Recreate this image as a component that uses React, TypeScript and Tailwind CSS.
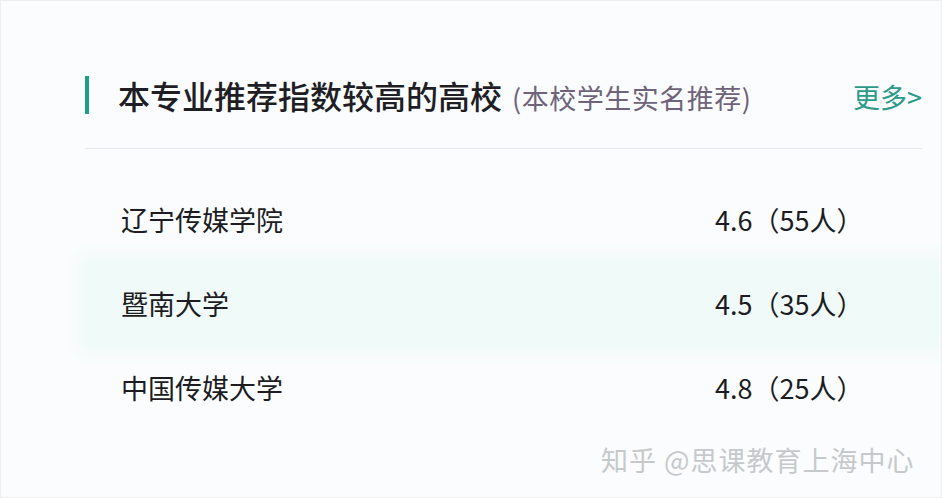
const schools = [
  { name: '辽宁传媒学院', score: '4.6', count: 55 },
  { name: '暨南大学', score: '4.5', count: 35, active: true },
  { name: '中国传媒大学', score: '4.8', count: 25 },
];

export default function App() {
  return (
    <div
      className="relative h-[498px] w-[942px] overflow-hidden border border-[#eceef0] bg-[#fafcfd]"
      style={{ fontFamily: '"Noto Sans CJK SC", "Noto Sans", sans-serif' }}
    >
      <div className="pl-[84px] pr-[19px] pt-[75px]">
        {/* header */}
        <div className="flex h-[38px] items-center">
          <div className="h-[38px] w-[4px] bg-[#1d9f87]" />
          <h2 className="ml-[29px] text-[32px] leading-none font-medium text-[#1e1e24]">本专业推荐指数较高的高校</h2>
          <span className="ml-[10px] mt-[4px] text-[27px] tracking-[0.5px] leading-none text-[#6e6379]">(本校学生实名推荐)</span>
          <a className="ml-auto mt-[2px] text-[27px] leading-none text-[#2b9a88]">更多&gt;</a>
        </div>
        <div className="mt-[34px] h-px bg-[#e5e8ea]" />
      </div>

      {/* list */}
      <div className="ml-[84px] mr-[4px] mt-[29px] flex flex-col">
        {schools.map((s) => (
          <div
            key={s.name}
            className={
              s.active
                ? 'flex h-[84px] items-center bg-[#f0faf8] shadow-[0_0_16px_6px_#f0faf8]'
                : 'flex h-[84px] items-center'
            }
          >
            <span className="w-[630px] pl-[36px] text-[27px] text-[#1c1c22]">{s.name}</span>
            <span className="text-[27px] text-[#1c1c22]">
              {s.score}（{s.count}人）
            </span>
          </div>
        ))}
      </div>

      {/* watermark */}
      <div className="absolute left-[600px] top-[439px] text-[27px] tracking-[1px] text-[#c6c9cc]">
        知乎 @思课教育上海中心
      </div>
    </div>
  );
}
